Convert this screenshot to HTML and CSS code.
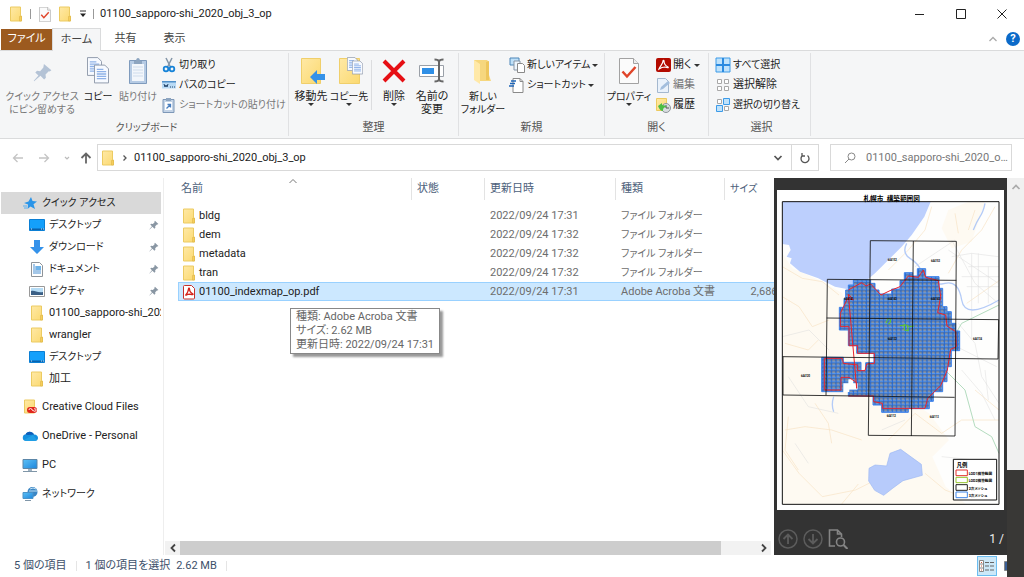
FILE: index.html
```html
<!DOCTYPE html>
<html lang="ja">
<head>
<meta charset="utf-8">
<title>01100_sapporo-shi_2020_obj_3_op</title>
<link rel="stylesheet" href="styles.css">
</head>
<body>
<svg class="defs" aria-hidden="true">
  <defs>
    <linearGradient id="gold" x1="0" y1="0" x2="1" y2="1"><stop offset="0" stop-color="#ffe9a6"/><stop offset="1" stop-color="#fbd970"/></linearGradient>
    <linearGradient id="sky" x1="0" y1="0" x2="1" y2="1"><stop offset="0" stop-color="#5cc0f5"/><stop offset="1" stop-color="#1e86dc"/></linearGradient>
    <symbol id="folder" viewBox="0 0 16 16"><path d="M2.500 1h10v9h1v5h-11z" fill="url(#gold)" stroke="#eccb62"/><path d="M11.500 10.500h2v4.500h-2z" fill="#f6cf5b" stroke="#dfb64a" stroke-width=".6"/></symbol>
    <symbol id="pin" viewBox="0 0 16 16"><path d="M9.500 1l5.500 5.500-1.500.8-.8-.3-2.800 2.800.3 2.700-1.500 1.500-3.200-3.200L1 15l-.3-.4L4.700 10 2 7.300l1.500-1.500 2.700.4L9 3.400 8.700 2.300z"/></symbol>
    <symbol id="lines" viewBox="0 0 16 20"><path d="M.5.500h11l4 4v15H.5z" fill="#f7faff" stroke="#8c96a8"/><path d="M3 5h7M3 7.500h10M3 10h10M3 12.500h10M3 15h10" stroke="#8fb2e8" stroke-width="1.400"/></symbol>
    <symbol id="desktop" viewBox="0 0 16 16"><path d="M.5 2.500h15v11H.5z" fill="#14a0fb" stroke="#0b7fd4"/><path d="M1 11.500h14v1.500H1z" fill="#0a63ae"/><path d="M2 12h1M12 12h1M14 12h1" stroke="#fff" stroke-width=".8"/></symbol>
    <symbol id="check" viewBox="0 0 20 26"><path d="M.5.500h14l5 5v20H.5z" fill="#fbfbfb" stroke="#a2a2a2"/><path d="M14.500.500v5h5" fill="#eee" stroke="#a2a2a2"/><path d="M3.500 13.500l4.500 5 8.500-9.500" fill="none" stroke="#e0452a" stroke-width="2.500"/></symbol>
    <pattern id="mesh" width="13" height="11.500" patternUnits="userSpaceOnUse"><path d="M0 0h13v11.500H0z" fill="#5595ee"/><path d="M3 2.500h8v6H3z" fill="#b4c0d2"/><path d="M0 0h13M0 5.500h13" stroke="#1c2a44" stroke-width="1.800"/><path d="M0 0v11.500" stroke="#1e66d8" stroke-width="4"/></pattern>
  </defs>
</svg>

<div class="window">
  <header class="titlebar">
    <svg class="i16"><use href="#folder"/></svg>
    <span class="bar"></span>
    <button class="plain" aria-label="プロパティ"><svg class="i12x15"><use href="#check"/></svg></button>
    <button class="plain" aria-label="新しいフォルダー"><svg class="i16"><use href="#folder"/></svg></button>
    <button class="plain" aria-label="カスタマイズ"><svg width="8" height="8" viewBox="0 0 8 8"><path d="M1 1h6" stroke="#333"/><path d="M1 3.500h6L4 7z" fill="#222"/></svg></button>
    <span class="bar"></span>
    <h1>01100_sapporo-shi_2020_obj_3_op</h1>
    <div class="controls">
      <button aria-label="最小化"><svg width="12" height="12"><path d="M1 6.500h9" stroke="#222"/></svg></button>
      <button aria-label="最大化"><svg width="12" height="12"><path d="M1.500 1.500h9v9h-9z" fill="none" stroke="#222"/></svg></button>
      <button aria-label="閉じる"><svg width="12" height="12"><path d="M1.500 1.500l9 9M10.500 1.500l-9 9" stroke="#222"/></svg></button>
    </div>
  </header>

  <nav class="tabs">
    <button class="tab file">ファイル</button>
    <button class="tab active">ホーム</button>
    <button class="tab">共有</button>
    <button class="tab">表示</button>
    <span class="grow"></span>
    <button class="plain" aria-label="リボンの最小化"><svg width="10" height="8" viewBox="0 0 10 8"><path d="M1.500 6L5 2.500 8.500 6" fill="none" stroke="#aaa" stroke-width="1.300"/></svg></button>
    <button class="help" aria-label="ヘルプ">?</button>
  </nav>

  <section class="ribbon" aria-label="リボン">
    <div class="group clip">
      <div class="tools">
        <button class="big dim wide kana"><svg class="i32" viewBox="0 0 32 28"><g transform="translate(7 7) scale(1.150)" fill="#b4c3d6"><path d="M9.500 0l6.500 5.500-1.500 1-.8-.3-2.800 3 .3 2.700-1.500 1.500-3.200-3.200L1 15l-.3-.4L4.700 10 2 7.300l1.500-1.500 2.700.4L9 3z"/></g></svg><span>クイック アクセス<br>にピン留めする</span></button>
        <button class="big kana"><svg class="i32" viewBox="0 0 32 28"><use href="#lines" x="5" y="0" width="15" height="19"/><use href="#lines" x="12" y="7" width="15" height="20"/></svg><span>コピー</span></button>
        <button class="big dim paste kana"><svg class="i32" viewBox="0 0 32 28"><path d="M7.500 3.500h17v23h-17z" fill="#b6cbe4" stroke="#7f9bbd"/><path d="M10 7h12v17H10z" fill="#f2f6fb"/><path d="M12 4h2c0-4 4-4 4 0h2v3h-8z" fill="#8da5c0"/><path d="M11 10h10M11 13h10M11 16h10M11 19h10" stroke="#cfdcec"/></svg><span>貼り付け</span></button>
        <div class="stack kana">
          <button class="small"><svg class="i16" viewBox="0 0 16 16"><path d="M5 1l5 10M11 1L6 11" stroke="#8496a8" stroke-width="1.500"/><circle cx="5" cy="12" r="2.300" fill="none" stroke="#1683d8" stroke-width="1.800"/><circle cx="11" cy="12" r="2.300" fill="none" stroke="#1683d8" stroke-width="1.800"/></svg>切り取り</button>
          <button class="small"><svg class="i16" viewBox="0 0 16 16"><path d="M1 4.500h14v7H1z" fill="#b8daf5"/><path d="M1 4h14v1.500H1z" fill="#4f8fc8"/><path d="M3 7l1 3 1-2 1 2 1-3M9 10h1M11 10h1M13 10h1" fill="none" stroke="#24466c"/></svg>パスのコピー</button>
          <button class="small dim"><svg class="i16" viewBox="0 0 16 16"><path d="M2 2.500h11v13H2z" fill="#c3d3e6" stroke="#7d97b7"/><path d="M5 1h5v3H5z" fill="#8da5c0"/><path d="M4 5h7v8H4z" fill="#fff"/><path d="M5.500 11.500l4-4M6.500 7.500h3v3" fill="none" stroke="#4a7fbf" stroke-width="1.300"/></svg>ショートカットの貼り付け</button>
        </div>
      </div>
      <h2 class="kana">クリップボード</h2>
    </div>

    <div class="group org">
      <div class="tools">
        <button class="big"><svg class="i32" viewBox="0 0 32 28"><path d="M6.500 1.500h19v25h-19z" fill="url(#gold)" stroke="#f0cf6b"/><path d="M15 20l7-7v4h8v6h-8v4z" fill="#3592e8"/></svg><span>移動先</span><i class="caret"></i></button>
        <button class="big kana"><svg class="i32" viewBox="0 0 32 28"><path d="M6.500 1.500h20v25h-20z" fill="url(#gold)" stroke="#f0cf6b"/><use href="#lines" x="14" y="0" width="11" height="14"/><use href="#lines" x="19" y="3" width="11" height="15"/></svg><span>コピー先</span><i class="caret"></i></button>
        <span class="split"></span>
        <button class="big"><svg class="i32" viewBox="0 0 32 28"><path d="M6 4l20 20M26 4L6 24" stroke="#e60f14" stroke-width="4"/></svg><span>削除</span><i class="caret"></i></button>
        <button class="big"><svg class="i32" viewBox="0 0 32 28"><path d="M3.500 8.500h24v11h-24z" fill="#fff" stroke="#9aa0a8"/><path d="M6 11h12v6H6z" fill="#2f8fe6"/><path d="M18.500 2.500q4 0 4.500 2 .5-2 4.500-2M18.500 24.500q4 0 4.500-2 .5 2 4.500 2M23 4v19" fill="none" stroke="#666" stroke-width="2"/></svg><span>名前の<br>変更</span></button>
      </div>
      <h2>整理</h2>
    </div>

    <div class="group fresh">
      <div class="tools">
        <button class="big kana"><svg class="i32" viewBox="0 0 32 28"><path d="M7 3h13l2 2v13l2 6H10l-3-2z" fill="#f6d77e"/><path d="M7 3l6 4v20l-6-4z" fill="#ffe9a8"/><path d="M19 5v18h3V4z" fill="#eec65c"/></svg><span>新しい<br>フォルダー</span></button>
        <div class="stack kana">
          <button class="small"><svg class="i16" viewBox="0 0 16 16"><path d="M1 1h9v7H1z" fill="#bfe0f8" stroke="#4d86b8"/><path d="M5 4h6v9H5z" fill="#eef6fd" stroke="#8795a5"/><path d="M8.500 6.500h5l2 2v7h-7z" fill="#fff" stroke="#8a8a8a"/></svg>新しいアイテム<i class="caret"></i></button>
          <button class="small"><svg class="i16" viewBox="0 0 16 16"><path d="M4 1.500h7l3 3v11H4z" fill="#fff" stroke="#8a8a8a"/><path d="M11 1.500v3h3" fill="none" stroke="#8a8a8a"/><path d="M2 4h5M1 6.500h5M0 9h5" stroke="#1f66b8" stroke-width="1.400"/></svg>ショートカット<i class="caret"></i></button>
        </div>
      </div>
      <h2>新規</h2>
    </div>

    <div class="group open">
      <div class="tools">
        <button class="big kana"><svg class="i32" viewBox="0 0 32 28"><use href="#check" x="6" y="1" width="20" height="26"/></svg><span>プロパティ</span><i class="caret"></i></button>
        <div class="stack">
          <button class="small"><svg class="i16" viewBox="0 0 16 16"><rect x="1" y="1" width="15" height="14" rx="2" fill="#b30b00"/><path d="M4 12c1-3 4-5 4-8 0-1 1-1 1 0 0 3 2 5 4 6 1 1-1 1-3 0-2 0-4 .6-6 2z" fill="none" stroke="#fff" stroke-width="1.200"/></svg>開く<i class="caret"></i></button>
          <button class="small dim"><svg class="i16" viewBox="0 0 16 16"><path d="M2.500 1.500h8l3 3v11h-11z" fill="#eaf2fb" stroke="#a4b8cf"/><path d="M5 13l1-3 7-6 2 2-7 6z" fill="#a3bedd"/></svg>編集</button>
          <button class="small"><svg class="i16" viewBox="0 0 16 16"><path d="M1.500 1.500h10v12h-10z" fill="url(#gold)" stroke="#edca5f"/><circle cx="11" cy="11" r="4.500" fill="#d9dde0" stroke="#8d959c"/><path d="M11 8v3h3" fill="none" stroke="#555"/><path d="M3 9l4-3v2c3 0 4 1 5 2-3 0-4 1-4 4-2 0-4-2-5-5z" fill="#4cbd45"/></svg>履歴</button>
        </div>
      </div>
      <h2>開く</h2>
    </div>

    <div class="group select">
      <div class="tools">
        <div class="stack">
          <button class="small kana"><svg class="i16" viewBox="0 0 16 16"><path d="M1 1h14v14H1z" fill="#bfe2fb" stroke="#3c9be8"/><path d="M8 1v14M1 8h14" stroke="#2a8ae0" stroke-width="2"/></svg>すべて選択</button>
          <button class="small"><svg class="i16" viewBox="0 0 16 16"><path d="M2.500 2.500h4v4h-4zM9.500 2.500h4v4h-4zM2.500 9.500h4v4h-4zM9.500 9.500h4v4h-4z" fill="#fff" stroke="#a8a8a8"/></svg>選択解除</button>
          <button class="small kana"><svg class="i16" viewBox="0 0 16 16"><path d="M2.500 2.500h4v4h-4zM9.500 9.500h4v4h-4z" fill="#fff" stroke="#a8a8a8"/><path d="M8.500 1.500h6v6h-6zM1.500 8.500h6v6h-6z" fill="#bfe2fb" stroke="#3c9be8"/></svg>選択の切り替え</button>
        </div>
      </div>
      <h2>選択</h2>
    </div>
  </section>

  <div class="address">
    <div class="arrows">
      <button class="plain" aria-label="戻る"><svg width="12" height="12" viewBox="0 0 12 12"><path d="M11 6H1.500M5.500 2l-4 4 4 4" fill="none" stroke="#c4c4c4" stroke-width="1.300"/></svg></button>
      <button class="plain" aria-label="進む"><svg width="12" height="12" viewBox="0 0 12 12"><path d="M1 6h9.500M6.500 2l4 4-4 4" fill="none" stroke="#c4c4c4" stroke-width="1.300"/></svg></button>
      <button class="plain" aria-label="最近表示した場所"><svg width="6" height="6" viewBox="0 0 6 6"><path d="M1 2l2 2 2-2" fill="none" stroke="#bbb" stroke-width="1.200"/></svg></button>
      <button class="plain" aria-label="上へ"><svg width="12" height="12" viewBox="0 0 12 12"><path d="M6 11.500V1.500M1.500 6L6 1.500 10.500 6" fill="none" stroke="#666" stroke-width="1.800"/></svg></button>
    </div>
    <div class="path">
      <svg class="i16"><use href="#folder"/></svg>
      <svg width="6" height="8" viewBox="0 0 6 8"><path d="M1.500 1.500L4 4 1.500 6.500" fill="none" stroke="#555" stroke-width="1.300"/></svg>
      <span class="grow">01100_sapporo-shi_2020_obj_3_op</span>
      <button class="plain" aria-label="以前の場所"><svg width="10" height="8" viewBox="0 0 10 8"><path d="M1.500 2L5 5.500 8.500 2" fill="none" stroke="#555" stroke-width="1.700"/></svg></button>
      <button class="plain reload" aria-label="最新の情報に更新"><svg width="12" height="12" viewBox="0 0 12 12"><path d="M8.500 3.500a4 4 0 1 1-5.500.5M3 1v3h3" fill="none" stroke="#555" stroke-width="1.300"/></svg></button>
    </div>
    <label class="search">
      <svg width="12" height="12" viewBox="0 0 12 12"><circle cx="7.500" cy="4.500" r="3.500" fill="none" stroke="#888"/><path d="M5 7L1 11" stroke="#888"/></svg>
      <input type="text" aria-label="検索" placeholder="01100_sapporo-shi_2020_obj_3_opの検索">
    </label>
  </div>

  <main class="body">
    <aside class="tree">
      <a class="node root current kana" href="#"><svg class="i16" viewBox="0 0 16 16"><path d="M9 2l1.500 4 4.500.5-3.500 2.800 1.500 4.700-4.500-2.500L5.500 14l.5-4.500L2 8l4.500-1.500z" fill="#2b95e8"/><path d="M1 11h4M2 13h3" stroke="#57aef0"/></svg><span>クイック アクセス</span></a>
      <a class="node kana" href="#"><svg class="i16"><use href="#desktop"/></svg><span>デスクトップ</span><svg class="pin"><use href="#pin"/></svg></a>
      <a class="node kana" href="#"><svg class="i16" viewBox="0 0 16 16"><path d="M5 1h6v7h4l-7 7-7-7h4z" fill="#3492ea"/></svg><span>ダウンロード</span><svg class="pin"><use href="#pin"/></svg></a>
      <a class="node kana" href="#"><svg class="i16" viewBox="0 0 16 16"><path d="M2.500 1.500h8l3 3v11h-11z" fill="#fff" stroke="#8f9499"/><path d="M4 4h2M4 6h8M4 8h3M4 10h8M4 12h8" stroke="#4a90d2"/><path d="M7 5h5v4H7z" fill="#6fb3e8"/></svg><span>ドキュメント</span><svg class="pin"><use href="#pin"/></svg></a>
      <a class="node kana" href="#"><svg class="i16" viewBox="0 0 16 16"><path d="M.5 3.500h15v10H.5z" fill="#fff" stroke="#999"/><path d="M2 5h12v7H2z" fill="#b6dcf5"/><path d="M2 8c4-1 6 2 12 1v3H2z" fill="#3a5f86"/></svg><span>ピクチャ</span><svg class="pin"><use href="#pin"/></svg></a>
      <a class="node" href="#"><svg class="i16"><use href="#folder"/></svg><span>01100_sapporo-shi_2020_obj_3_op</span></a>
      <a class="node" href="#"><svg class="i16"><use href="#folder"/></svg><span>wrangler</span></a>
      <a class="node kana" href="#"><svg class="i16"><use href="#desktop"/></svg><span>デスクトップ</span></a>
      <a class="node last" href="#"><svg class="i16"><use href="#folder"/></svg><span>加工</span></a>
      <a class="node root" href="#"><svg class="i16" viewBox="0 0 16 16"><path d="M2.500 1h10v13h-10z" fill="url(#gold)" stroke="#eccb62"/><rect x="5" y="8" width="10" height="6" rx="3" fill="#e1251b"/><path d="M7 11a1.500 1.500 0 0 1 3 0l2 1a1.300 1.300 0 1 0 0-2" fill="none" stroke="#fff" stroke-width=".9"/></svg><span>Creative Cloud Files</span></a>
      <a class="node root" href="#"><svg class="i16" viewBox="0 0 16 16"><path d="M3.500 13a3.300 3.300 0 0 1 0-6.500C5 3 10 2.500 12 6.500c3 0 4 2 4 3.500s-1 3-3 3z" fill="#1490df"/><path d="M1 8c2-2 3-1.500 5-1l6-.5C10 2.500 5 3 3.500 6.500z" fill="#0f5db8"/><path d="M2 12l9-5 4 5-2 1H3z" fill="#28a8ea" opacity=".6"/></svg><span>OneDrive - Personal</span></a>
      <a class="node root" href="#"><svg class="i16" viewBox="0 0 16 16"><path d="M1 2.500h14v9H1z" fill="url(#sky)" stroke="#5b86a8"/><path d="M6 12h4v2H6z" fill="#9fb3c2"/><path d="M1 14.500h14" stroke="#8096a8"/></svg><span>PC</span></a>
      <a class="node root kana" href="#"><svg class="i16" viewBox="0 0 16 16"><circle cx="10.500" cy="6" r="5" fill="#3b86c4"/><path d="M8 3q3-2 6 0M7 5h8" stroke="#bfe0f5" fill="none"/><path d="M1 6.500h10v6H1z" fill="url(#sky)" stroke="#4b93c8"/><path d="M3 14.500h6" stroke="#8096a8"/></svg><span>ネットワーク</span></a>
    </aside>

    <section class="files">
      <table>
        <colgroup><col class="c-name"><col class="c-state"><col class="c-date"><col class="c-type"><col class="c-size"></colgroup>
        <thead><tr><th>名前<svg class="sort" width="10" height="6" viewBox="0 0 10 6"><path d="M1.500 5L5 1.500 8.500 5" fill="none" stroke="#777"/></svg></th><th>状態</th><th>更新日時</th><th>種類</th><th class="kana">サイズ</th></tr></thead>
        <tbody>
          <tr><td class="name"><svg class="i16"><use href="#folder"/></svg>bldg</td><td></td><td>2022/09/24 17:31</td><td class="kana">ファイル フォルダー</td><td></td></tr>
          <tr><td class="name"><svg class="i16"><use href="#folder"/></svg>dem</td><td></td><td>2022/09/24 17:32</td><td class="kana">ファイル フォルダー</td><td></td></tr>
          <tr><td class="name"><svg class="i16"><use href="#folder"/></svg>metadata</td><td></td><td>2022/09/24 17:32</td><td class="kana">ファイル フォルダー</td><td></td></tr>
          <tr><td class="name"><svg class="i16"><use href="#folder"/></svg>tran</td><td></td><td>2022/09/24 17:32</td><td class="kana">ファイル フォルダー</td><td></td></tr>
          <tr class="selected"><td class="name"><svg class="i16" viewBox="0 0 16 16"><path d="M3.500 1.500h7l3 3v9.500q0 1-1 1h-9q-1 0-1-1v-11.500q0-1 1-1z" fill="#fff" stroke="#c8302a"/><path d="M4.500 11.500c1.500-2 3-4 3-6.500 0-1 1-1 1 0 0 2 1.500 4 3.500 5 .5 1-1 .6-3 .2-1.500 0-3 .5-4.500 1.300z" fill="none" stroke="#d3231b" stroke-width="1.300"/></svg>01100_indexmap_op.pdf</td><td></td><td>2022/09/24 17:31</td><td>Adobe Acroba 文書</td><td class="size">2,686 KB</td></tr>
        </tbody>
      </table>
      <div class="tooltip" role="tooltip">種類: Adobe Acroba 文書<br>サイズ: 2.62 MB<br>更新日時: 2022/09/24 17:31</div>
      <div class="hscroll">
        <button class="plain" aria-label="左へ"><svg width="8" height="10" viewBox="0 0 8 10"><path d="M6 1.500L2.500 5 6 8.500" fill="none" stroke="#444" stroke-width="1.800"/></svg></button>
        <div class="track"><div class="thumb"></div></div>
        <button class="plain" aria-label="右へ"><svg width="8" height="10" viewBox="0 0 8 10"><path d="M2 1.500L5.500 5 2 8.500" fill="none" stroke="#444" stroke-width="1.800"/></svg></button>
      </div>
    </section>

    <section class="preview" aria-label="プレビュー">
      <svg class="page" viewBox="6 0 681 960" role="img" aria-label="札幌市 構築範囲図">
        <path d="M6 0h681v960H6z" fill="#fff"/>
        <path d="M22 35h650v907H22z" fill="#fefefd"/>
        <path d="M22 190l30 45 80 35 70 40 20 100 60 90v60l100 60 80 50 60 80-50 50 40 90 60 52H22zM520 60l60-25h50l-40 120-60 20-30-60z" fill="#fefaf2"/>
        <path d="M22 35H467L448 80 410 135 380 170 340 210 300 250 270 275 215 297 180 290 130 265 75 245 45 220 50 205 35 200 47 180 42 165 22 162z" fill="#bccffd"/>
        <g fill="none" stroke="#f8e2c4" stroke-width="2">
          <path d="M22 230l60 35 60 10 50 40M470 50l-20 70-50 60-60 60M520 250l40-70 60-60 40-70M575 340l100-70M22 320l50 30 40 60 50-20M600 600l72 60M672 690H560l-60 40-80-60-80 80M22 780l50 70 70 70 100-20 60-30M30 720l60-10 80 10 90 30M450 850l60 50 80 30M200 942l50-60"/>
          <path d="M40 680l-10 100 40 60M120 640l40 60 10 60M540 70l10 60M600 60l-20 60M30 460l70 20 30-30"/>
        </g>
        <g fill="none" stroke="#dcdcdc" stroke-width="1.500">
          <path d="M590 190v260M610 190v150M560 260h112M580 230h92M575 290h97M640 230v110M530 200l60-10 80 10M550 400l50 60 20 100 52 80M560 540l60 70 40 80M630 540l10 90M22 440l80-20 60 60M40 560l60 90 90 20M60 760l40 60M320 720l70-30M500 800l100 10"/>
          <path d="M520 180l150 100M530 150l70 130 70 60M545 470l120 60M420 230l120-80"/>
        </g>
        <path d="M395 160q-15 30 10 45t35 40M440 260q30 30 70 20t50 50 112 0M630 40q-5 25-15 40t-20 40M176 620q-8 25 0 45" fill="none" stroke="#b4cbf7" stroke-width="4"/>
        <path d="M672 345L560 400 490 520 570 600 600 710 650 740 672 790" fill="none" stroke="#b4dcbf" stroke-width="3"/>
        <path d="M282 835l18-10 35 3 10-38 32-12 62 45 3 33-58 16-30 22-28 22-27-15-18-28z" fill="#b7cbfb" stroke="#9db8f3" stroke-width="2"/>
        <path d="M220 285H235V270H287V280H300V300H312V312H350V297H375V272H388V248H413V258H427V236H452V260H492V295H503V350H516V365H529V400H542V423H554V482H529V530H516V575H503V605H475V634H463V656H400V667H320V645H294V618H220V600H248V580H205V605H140V502H205V517H258V542H272V518H297V490H245V467H220V420H193V352H207V325H212V300H220z" fill="url(#mesh)" stroke="#3b80ea" stroke-width="3"/>
        <path d="M205 580h15v-12h15v12h13v18h-25v8h-18z" fill="#fff"/>
        <path d="M220 300L260 278 273 288 287 282 318 315 345 302 375 290 400 258 430 262 445 240 452 262 490 272 497 320 488 368 512 375 516 408 542 425 544 470 527 478 517 540 497 587 458 625 450 655H322V640L296 635V618H220M245 595V578L222 562H198V600H148V505H202L205 520 248 525V542H270L275 522 298 520V490H248V467H222V410H196V370L218 325 235 330 220 312z" fill="none" stroke="#e8232b" stroke-width="3"/>
        <path d="M333 400l6-15 8 3-2 12-6 2M375 407l20-2 8 5 14-2M388 402v18l12 3-3-18" fill="none" stroke="#5fc92c" stroke-width="3"/>
        <g fill="none" stroke="#111" stroke-width="2.500"><path d="M286 152l258 2-4 584-260-2zM415 153l-6 585M157 268l387 3M155 384l516 5-2 118-647-7M157 268l-4 348M24 500v115l515 7"/></g>
        <g class="map-label"><text x="338" y="214">644152</text><text x="468" y="216">644153</text><text x="338" y="330">644142</text><text x="468" y="331">644143</text><text x="208" y="329">644141</text><text x="594" y="451">644134</text><text x="78" y="561">644120</text><text x="338" y="449">644132</text><text x="335" y="680">644112</text><text x="464" y="683">644113</text></g>
        <path d="M22 35h650v908H22z" fill="none" stroke="#111" stroke-width="3"/>
        <text class="map-title" x="350" y="32" xml:space="preserve">札幌市  構築範囲図</text>
        <path d="M535 808h130v122H535z" fill="#fff" stroke="#111" stroke-width="3"/>
        <g class="legend"><text class="legend-title" x="545" y="831">凡例</text><text x="581" y="855">LOD1構築範囲</text><text x="581" y="876">LOD2構築範囲</text><text x="581" y="899">2次メッシュ</text><text x="581" y="921">3次メッシュ</text></g>
        <g fill="#fff" stroke-width="3"><path d="M543 840h34v17h-34z" stroke="#e3312d"/><path d="M543 862h34v16h-34z" stroke="#93c22c"/><path d="M543 884h34v17h-34z" stroke="#222"/><path d="M543 906h34v17h-34z" stroke="#3f86ea"/></g>
      </svg>
      <div class="pager">
        <button class="plain" aria-label="前のページ"><svg width="20" height="20" viewBox="0 0 20 20"><circle cx="10" cy="10" r="9" fill="none" stroke="#5c5c5c" stroke-width="1.500"/><path d="M10 15V5.500M5.500 10L10 5.500l4.500 4.500" fill="none" stroke="#5c5c5c" stroke-width="1.800"/></svg></button>
        <button class="plain" aria-label="次のページ"><svg width="20" height="20" viewBox="0 0 20 20"><circle cx="10" cy="10" r="9" fill="none" stroke="#5c5c5c" stroke-width="1.500"/><path d="M10 5v9.500M5.500 10l4.500 4.500 4.500-4.500" fill="none" stroke="#5c5c5c" stroke-width="1.800"/></svg></button>
        <button class="plain" aria-label="検索"><svg width="20" height="20" viewBox="0 0 20 20"><path d="M7 17H1.500V1h8l4 4v3M9.500 1v4h4" fill="none" stroke="#858585" stroke-width="1.600"/><circle cx="12.500" cy="13" r="4" fill="none" stroke="#858585" stroke-width="1.600"/><path d="M15.500 16l4 4" stroke="#858585" stroke-width="2"/></svg></button>
        <span class="grow"></span>
        <span class="count">1 /</span>
      </div>
    </section>
    <div class="vscroll"><button class="plain" aria-label="上へスクロール"><svg width="10" height="8" viewBox="0 0 10 8"><path d="M1.500 6L5 2.500 8.500 6" fill="none" stroke="#aaa" stroke-width="1.700"/></svg></button></div>
  </main>

  <footer class="status">
    <span>5 個の項目</span><span class="bar"></span><span>1 個の項目を選択</span><span class="bytes">2.62 MB</span><span class="bar"></span>
    <span class="grow"></span>
    <button class="view on" aria-label="詳細"><svg width="16" height="14" viewBox="0 0 16 14"><path d="M.5 1.500h4v11h-4zM.5 5h4M.5 9h4" fill="#fff" stroke="#888"/><path d="M2 3.500h1M2 7h1M2 11h1" stroke="#d05a3a"/><path d="M6 3.500h4M11 3.500h4M6 7h4M11 7h4M6 11h4M11 11h4" stroke="#666"/></svg></button>
    <button class="view" aria-label="大アイコン"><svg width="16" height="14" viewBox="0 0 16 14"><path d="M.5 2.500h14v9H.5z" fill="#3a5f96" stroke="#888"/></svg></button>
  </footer>
  <div class="corner"></div>
</div>
</body>
</html>
```
FILE: styles.css
```css
* { box-sizing: border-box; }

body {
  margin: 0;
  background: #fff;
  color: #222;
  font: 11px/14px Roboto, "Noto Sans CJK JP", sans-serif;
  font-feature-settings: "palt";
}

button, input {
  font: inherit;
  font-feature-settings: inherit;
  color: inherit;
}

button {
  border: 0;
  padding: 0;
  background: none;
}

svg { display: block; flex: none; }
h1, h2 { margin: 0; font-size: 11px; font-weight: 400; }

.defs { position: absolute; width: 0; height: 0; }
.kana, h2.kana { font-size: 10px; }
.i16 { width: 16px; height: 16px; }
.i12x15 { width: 12px; height: 15px; }
.i32 { width: 32px; height: 28px; }
.grow { flex: 1; }
.plain { display: flex; align-items: center; justify-content: center; }
.bar { width: 1px; height: 10px; background: #999; }

.window {
  position: relative;
  display: flex;
  flex-direction: column;
  height: 100vh;
  overflow: hidden;
}

.titlebar {
  display: flex;
  align-items: center;
  gap: 6px;
  height: 28px;
  padding: 0 2px 0 8px;
}
.titlebar .bar + .plain { margin-left: 2px; }
.controls { display: flex; margin-left: auto; }
.controls button {
  display: flex;
  align-items: center;
  justify-content: center;
  width: 41px;
  height: 28px;
}

.tabs {
  display: flex;
  align-items: center;
  height: 23px;
  padding: 0 4px 0 1px;
  border-bottom: 1px solid #dadbdc;
}
.tab { width: 49px; height: 21px; color: #444; }
.tab.file { width: 51px; background: #9c5a1f; color: #fff; }
.tab.active {
  height: 23px;
  border: 1px solid #dadbdc;
  border-bottom: 0;
  background: #f5f6f7;
  align-self: flex-start;
}
.help {
  width: 14px;
  height: 14px;
  margin-left: 8px;
  border-radius: 50%;
  background: #0b6ac9;
  color: #fff;
  font-weight: 700;
}

.ribbon {
  display: flex;
  height: 88px;
  padding: 2px 0;
  border-bottom: 1px solid #dadbdc;
  background: #f5f6f7;
}
.group {
  display: flex;
  flex-direction: column;
  justify-content: space-between;
  border-right: 1px solid #e0e1e3;
}
.group h2 { text-align: center; line-height: 16px; color: #555; }
.tools { display: flex; padding-top: 4px; }
.clip { width: 289px; padding-left: 5px; }
.org { width: 170px; }
.fresh { width: 146px; }
.open { width: 104px; }
.select { width: 102px; padding-left: 4px; }
.big {
  display: flex;
  flex: none;
  flex-direction: column;
  align-items: center;
  width: 38px;
  line-height: 13px;
  white-space: nowrap;
}
.big span { padding-top: 5px; }
.wide { width: 74px; }
.paste { margin-left: 2px; }
.org .tools { padding-left: 3px; }
.fresh .big, .open .big { width: 48px; }
.dim { color: #777; }
.caret {
  width: 0;
  height: 0;
  border: 3px solid transparent;
  border-top-color: #333;
  border-bottom: 0;
}
.split { width: 1px; height: 50px; margin: 3px 3px 0; background: #dcdddf; }
.stack { display: flex; flex-direction: column; padding-left: 2px; }
.clip .stack { padding-left: 4px; }
.small {
  display: flex;
  align-items: center;
  gap: 2px;
  height: 20px;
  white-space: nowrap;
}
.stack .small:first-child { height: 16px; margin-bottom: 2px; }

.address {
  display: flex;
  align-items: stretch;
  height: 39px;
  padding: 5px 12px 7px 0;
}
.arrows {
  display: flex;
  align-items: center;
  gap: 14px;
  width: 97px;
  padding-left: 12px;
}
.arrows .plain:nth-child(3) { margin-right: -4px; }
.path, .search {
  display: flex;
  align-items: center;
  border: 1px solid #d9d9d9;
}
.path { flex: 1; gap: 6px; padding-left: 2px; }
.reload { width: 27px; height: 100%; margin-left: 2px; border-left: 1px solid #d9d9d9; }
.search { width: 182px; margin-left: 11px; padding-left: 13px; gap: 10px; }
.search input {
  flex: 1;
  min-width: 0;
  border: 0;
  padding: 0;
  background: none;
  text-overflow: ellipsis;
}
.search input::placeholder { color: #777; }

.body { display: flex; flex: 1; min-height: 0; }

.tree {
  width: 164px;
  padding: 14px 2px 0 1px;
  border-right: 1px solid #eee;
}
.node {
  display: flex;
  align-items: center;
  gap: 4px;
  height: 22px;
  padding-left: 28px;
  color: #222;
  text-decoration: none;
  white-space: nowrap;
}
.node span { flex: 1; overflow: hidden; }
.root { height: 29px; padding-left: 21px; }
.last { margin-bottom: 2px; }
.current { height: 22px; background: #d9d9d9; }
.pin { width: 10px; height: 10px; margin-right: 2px; fill: #8996a3; }

.files {
  position: relative;
  display: flex;
  flex-direction: column;
  flex: 1;
  min-width: 0;
  padding: 0 3px 0 14px;
  overflow: hidden;
}
table {
  width: 621px;
  table-layout: fixed;
  border-spacing: 0;
  white-space: nowrap;
}
.c-name { width: 234px; }
.c-state { width: 73px; }
.c-date { width: 131px; }
.c-type { width: 109px; }
.c-size { width: 74px; }
th {
  height: 22px;
  padding: 0 5px;
  border-right: 1px solid #e3e3e3;
  color: #4c607a;
  font-weight: 400;
  text-align: left;
}
th:first-child { padding-left: 3px; }
.sort { position: absolute; left: 124px; top: 0; }
thead::after { content: ""; display: block; height: 6px; }
td {
  height: 19px;
  padding: 0 5px;
  border: 0 solid #99d1ff;
  color: #6d6d6d;
}
.name { display: flex; align-items: center; gap: 2px; padding-left: 3px; color: #222; }
.selected td { background: #cce8ff; border-width: 1px 0; }
.selected .name { border-left-width: 1px; padding-left: 2px; }
.size { text-align: right; }

.tooltip {
  position: absolute;
  left: 126px;
  top: 130px;
  padding: 1px 5px;
  border: 1px solid #888;
  background: #fff;
  box-shadow: 3px 3px 2px #999;
  color: #666;
  white-space: nowrap;
}

.hscroll {
  display: flex;
  height: 14px;
  margin: auto 0 0 -13px;
  background: #f2f2f2;
}
.hscroll .plain { width: 15px; }
.track { flex: 1; }
.thumb { width: 94%; height: 14px; background: #cdcdcd; }

.preview {
  display: flex;
  flex-direction: column;
  width: 233px;
  padding: 12px 3px 0;
  background: #333;
}
.page { width: 100%; height: auto; }
.map-label { font-size: 8px; font-weight: 700; }
.map-title { font-size: 20px; font-weight: 700; text-anchor: middle; }
.legend { font-size: 11px; font-weight: 700; }
.legend-title { font-size: 16px; }
.pager {
  display: flex;
  flex: 1;
  align-items: center;
  gap: 5px;
  padding: 12px 0 0 1px;
  white-space: nowrap;
}
.count { color: #eee; font-size: 12px; }

.vscroll { width: 17px; padding: 5px 4px; background: #f0f0f0; }

.status {
  display: flex;
  align-items: center;
  gap: 9px;
  height: 22px;
  padding-left: 14px;
  color: #3c4f69;
  white-space: nowrap;
}
.status .bar { background: #e5e5e5; }
.bytes { margin-left: -3px; }
.view { display: flex; align-items: center; justify-content: center; width: 20px; height: 20px; }
.view.on { border: 1px solid #6cbdf0; background: #cce8f8; }
.status .view + .view { width: 25px; margin-left: -7px; }

.corner {
  position: absolute;
  right: 0;
  bottom: 0;
  width: 17px;
  height: 107px;
  background: #393836;
}
```
